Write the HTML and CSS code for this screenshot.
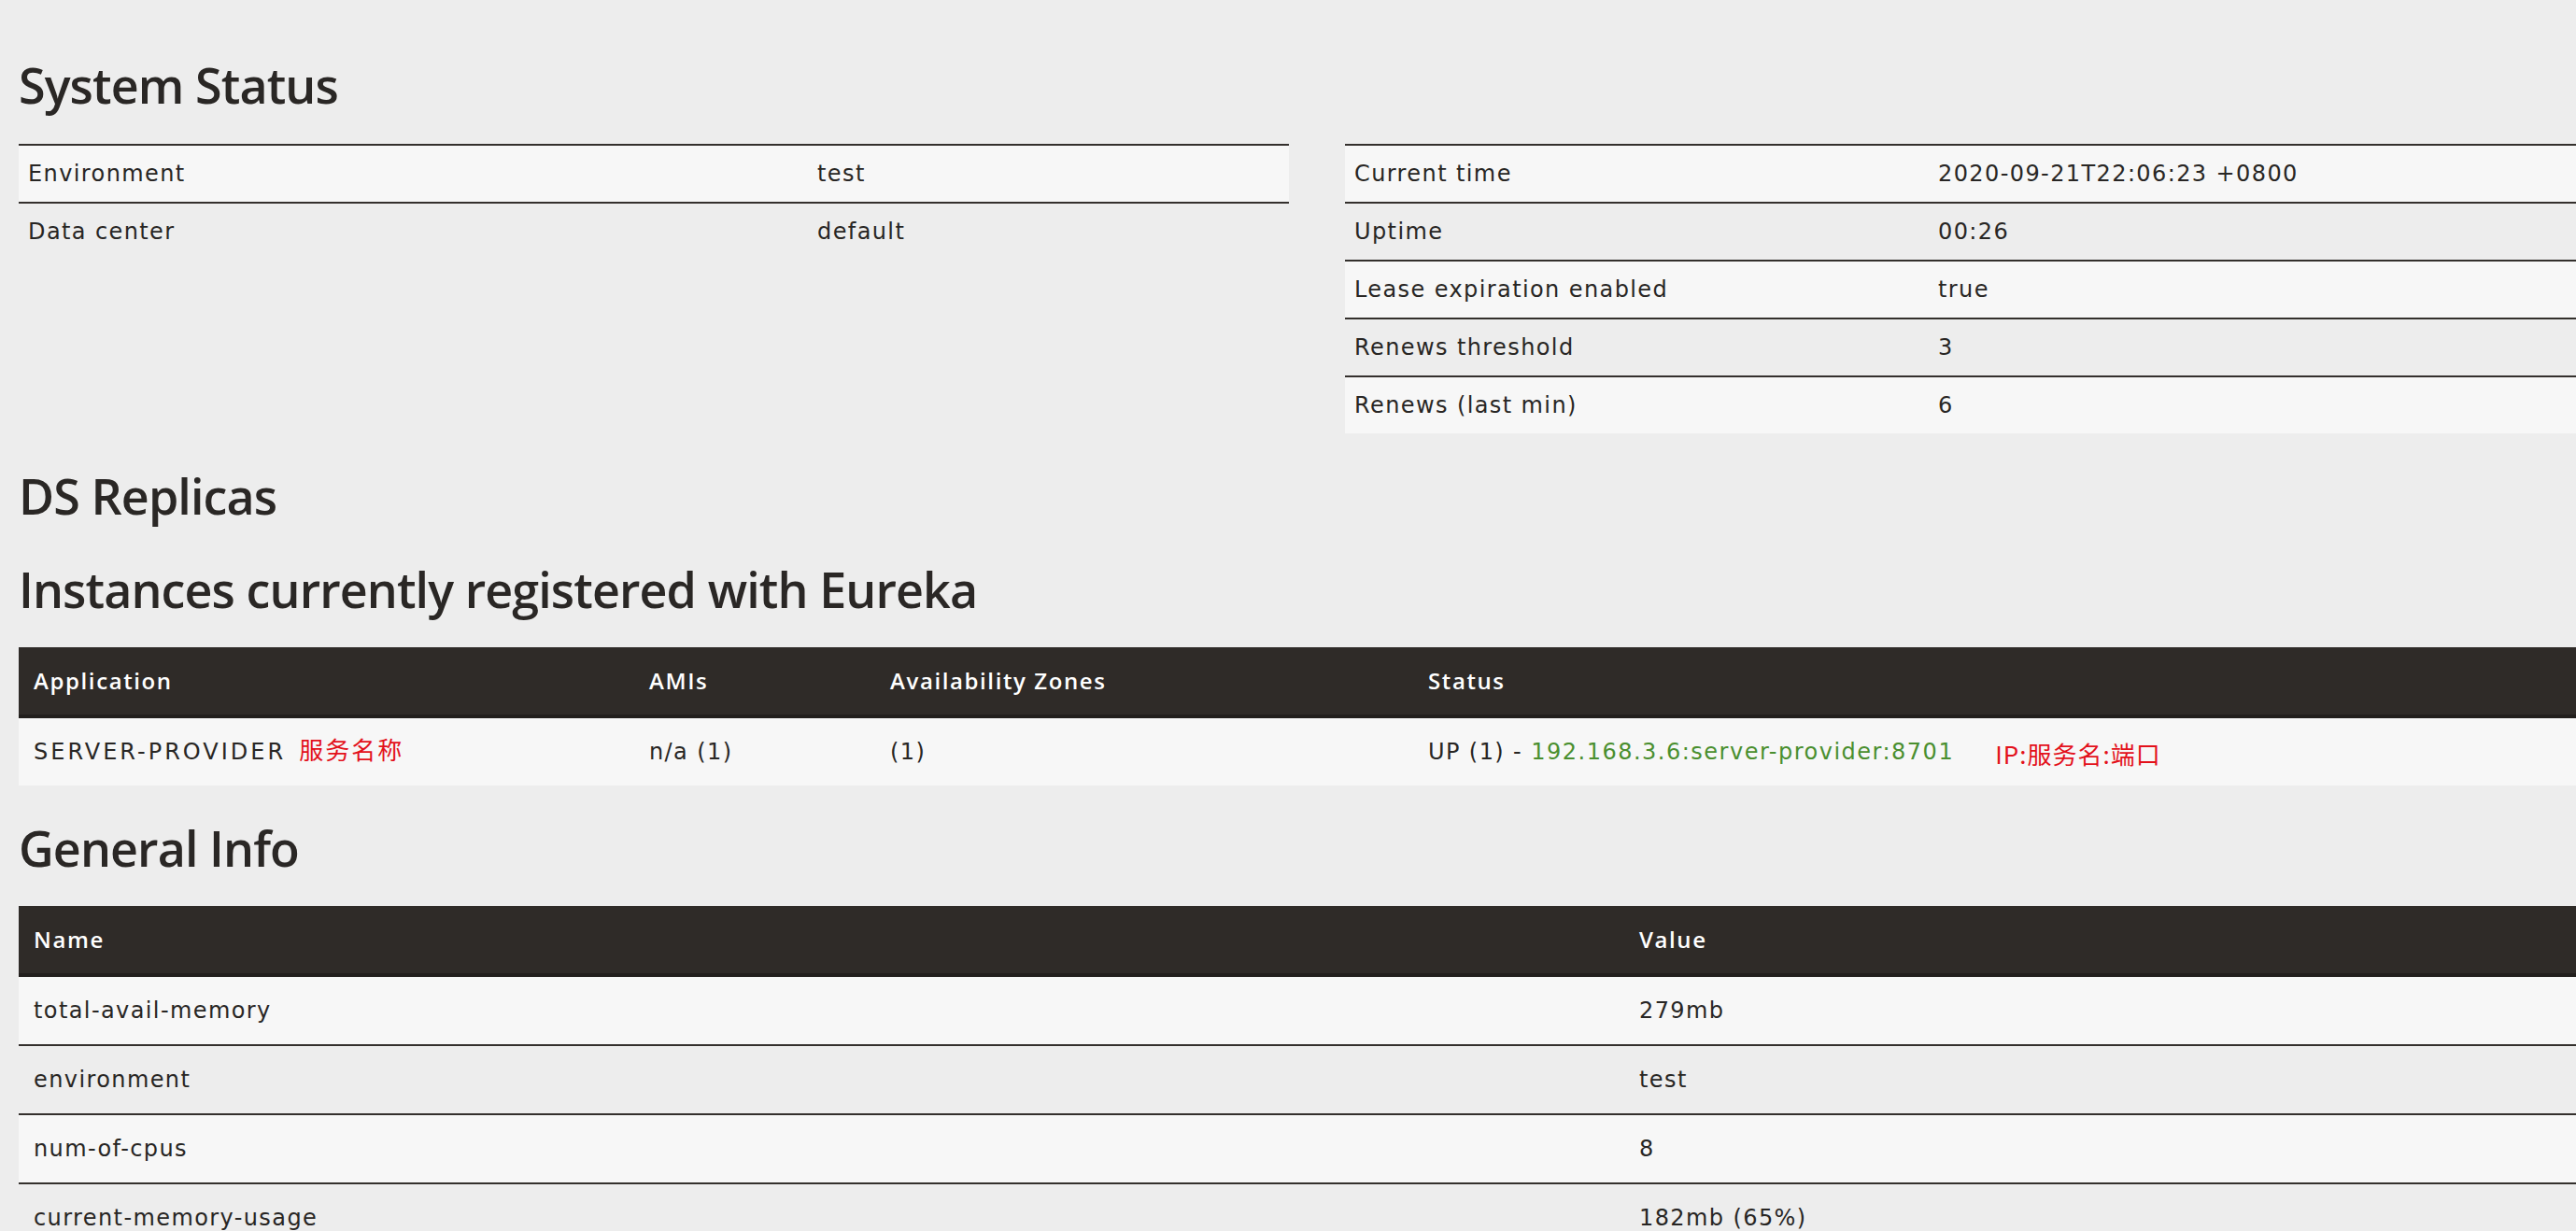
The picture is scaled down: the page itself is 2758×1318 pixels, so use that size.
FILE: index.html
```html
<!DOCTYPE html>
<html lang="en">
<head>
    <meta charset="UTF-8">
    <title>Eureka</title>
    <link rel="stylesheet" href="styles.css">
</head>
<body>

    <div class="container">

        <h2 class="first">System Status</h2>
        <div class="status-row">
            <table class="table condensed striped">
                <tbody>
                    <tr><td class="label-left">Environment</td><td>test</td></tr>
                    <tr><td class="label-left">Data center</td><td>default</td></tr>
                </tbody>
            </table>
            <table class="table condensed striped">
                <tbody>
                    <tr><td class="label-right">Current time</td><td>2020-09-21T22:06:23 +0800</td></tr>
                    <tr><td class="label-right">Uptime</td><td>00:26</td></tr>
                    <tr><td class="label-right">Lease expiration enabled</td><td>true</td></tr>
                    <tr><td class="label-right">Renews threshold</td><td>3</td></tr>
                    <tr><td class="label-right">Renews (last min)</td><td>6</td></tr>
                </tbody>
            </table>
        </div>

        <h2 class="replicas">DS Replicas</h2>

        <h2>Instances currently registered with Eureka</h2>
        <table class="table striped" id="instances">
            <thead>
                <tr>
                    <th class="col-app">Application</th>
                    <th class="col-ami">AMIs</th>
                    <th class="col-zone">Availability Zones</th>
                    <th>Status</th>
                </tr>
            </thead>
            <tbody>
                <tr>
                    <td><b class="app-name">SERVER-PROVIDER</b><span class="note note-app">服务名称</span></td>
                    <td>n/a (1)</td>
                    <td>(1)</td>
                    <td>UP (1) - <a href="#">192.168.3.6:server-provider:8701</a><span class="note note-ip">IP:服务名:端口</span></td>
                </tr>
            </tbody>
        </table>

        <h2>General Info</h2>
        <table class="table striped" id="generalInfo">
            <thead>
                <tr>
                    <th class="col-name">Name</th>
                    <th>Value</th>
                </tr>
            </thead>
            <tbody>
                <tr><td>total-avail-memory</td><td>279mb</td></tr>
                <tr><td>environment</td><td>test</td></tr>
                <tr><td>num-of-cpus</td><td>8</td></tr>
                <tr><td>current-memory-usage</td><td>182mb (65%)</td></tr>
                <tr><td>server-uptime</td><td>00:26</td></tr>
                <tr><td>registered-replicas</td><td></td></tr>
                <tr><td>unavailable-replicas</td><td></td></tr>
                <tr><td>available-replicas</td><td></td></tr>
            </tbody>
        </table>

    </div>

</body>
</html>
```

FILE: styles.css
```css
html, body {
    overflow: hidden;
}
body {
    margin: 0;
    background-color: #ededed;
    color: #282624;
    font-family: "DejaVu Sans", "Noto Sans CJK SC", sans-serif;
    font-size: 24px;
    letter-spacing: 1.4px;
}
.container {
    width: 2780px;
    padding: 24px 0 0 20px;
}
h2 {
    font-family: "Open Sans", sans-serif;
    font-size: 52px;
    font-weight: 600;
    letter-spacing: -0.9px;
    line-height: 60px;
    margin: 37px 0 32px;
    color: #2a2725;
}
h2.first {
    margin-bottom: 33px;
}
h2.replicas {
    margin-bottom: 40px;
}
.status-row {
    display: grid;
    grid-template-columns: 1360px 1360px;
    column-gap: 60px;
    align-items: start;
}
.table {
    width: 100%;
    border-collapse: separate;
    border-spacing: 0;
}
.table td, .table th {
    padding: 16px;
    line-height: 40px;
    text-align: left;
    vertical-align: top;
    white-space: nowrap;
}
.table td {
    border-top: 2px solid #34302d;
}
.table thead th {
    background: #2f2b28;
    color: #ffffff;
    font-family: "Open Sans", sans-serif;
    font-weight: 600;
    letter-spacing: 1.6px;
    border-bottom: 4px solid #221f1d;
}
.table thead + tbody tr:first-child td {
    border-top: 0;
}
.striped tbody tr:nth-child(odd) {
    background: #f7f7f7;
}
.condensed td {
    padding: 10px;
}
.label-left {
    width: 825px;
}
.label-right {
    width: 605px;
}
.col-app {
    width: 627px;
}
.col-ami {
    width: 226px;
}
.col-zone {
    width: 544px;
}
.col-name {
    width: 1687px;
}
.app-name {
    font-weight: normal;
    letter-spacing: 3px;
}
a {
    color: #4a8f2f;
    text-decoration: none;
    letter-spacing: 1.5px;
}
.note {
    color: #e3111b;
    font-family: "Noto Sans CJK SC", sans-serif;
    font-size: 26px;
    line-height: 20px;
}
.note-app {
    margin-left: 14px;
    letter-spacing: 2px;
}
.note-ip {
    margin-left: 44px;
    letter-spacing: 1px;
    vertical-align: -5px;
}
```
